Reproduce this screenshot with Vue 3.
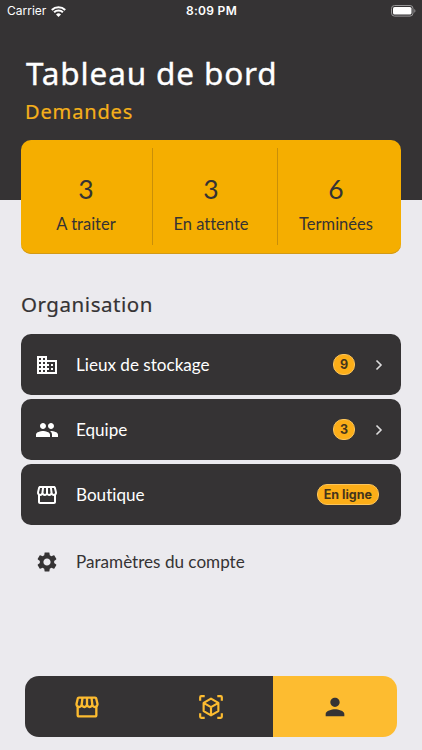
<script setup>
const paths = {
  business: 'M12 7V3H2v18h20V7H12zM6 19H4v-2h2v2zm0-4H4v-2h2v2zm0-4H4V9h2v2zm0-4H4V5h2v2zm4 12H8v-2h2v2zm0-4H8v-2h2v2zm0-4H8V9h2v2zm0-4H8V5h2v2zm10 12h-8v-2h2v-2h-2v-2h2v-2h-2V9h8v10zm-2-8h-2v2h2v-2zm0 4h-2v2h2v-2z',
  people: 'M16 11c1.66 0 2.99-1.34 2.99-3S17.66 5 16 5s-3 1.34-3 3 1.34 3 3 3zm-8 0c1.66 0 2.99-1.34 2.99-3S9.66 5 8 5 5 6.34 5 8s1.34 3 3 3zm0 2c-2.33 0-7 1.17-7 3.5V19h14v-2.500c0-2.330-4.670-3.500-7-3.500zm8 0c-.29 0-.62.02-.97.05 1.160.84 1.970 1.970 1.970 3.450V19h6v-2.500c0-2.330-4.670-3.500-7-3.500z',
  store: 'M21.9 8.89l-1.05-4.37c-.22-.9-1-1.52-1.91-1.52H5.05c-.9 0-1.69.63-1.9 1.52L2.1 8.89c-.24 1.02-.02 2.06.62 2.88.08.11.19.19.28.29V19c0 1.1.9 2 2 2h14c1.1 0 2-.9 2-2v-6.94c.09-.09.2-.18.28-.28.64-.82.87-1.87.62-2.89zm-2.99-3.9l1.05 4.37c.1.42.01.84-.25 1.17-.14.18-.44.47-.94.47-.61 0-1.14-.49-1.21-1.14L16.98 5l1.93-.01zM13 5h1.96l.54 4.52c.05.39-.07.78-.33 1.07-.22.26-.54.41-.95.41-.67 0-1.22-.59-1.22-1.31V5zM8.49 9.52L9.04 5H11v4.69c0 .72-.55 1.31-1.29 1.31-.34 0-.65-.15-.89-.41-.25-.29-.37-.68-.33-1.07zm-4.45-.16L5.05 5h1.97l-.58 4.86c-.08.65-.6 1.14-1.21 1.14-.49 0-.8-.29-.93-.47-.27-.32-.36-.75-.26-1.17zM5 19v-6.03c.08.01.15.03.23.03.87 0 1.66-.36 2.24-.95.6.6 1.4.95 2.31.95.87 0 1.65-.36 2.23-.93.59.57 1.39.93 2.29.93.84 0 1.64-.35 2.24-.95.58.59 1.37.95 2.24.95.08 0 .15-.02.23-.03V19H5z',
  settings: 'M19.14 12.94c.04-.3.06-.61.06-.94 0-.32-.02-.64-.07-.94l2.030-1.580c.18-.14.23-.41.12-.61l-1.920-3.320c-.12-.22-.37-.29-.59-.22l-2.390.96c-.5-.38-1.030-.7-1.620-.94l-.36-2.540c-.04-.24-.24-.41-.48-.41h-3.840c-.24 0-.43.17-.47.41l-.36 2.540c-.59.24-1.130.57-1.620.94l-2.390-.96c-.22-.08-.47 0-.59.22L2.740 8.870c-.12.21-.08.47.12.61l2.030 1.580c-.05.3-.09.63-.09.94s.02.64.07.94l-2.030 1.580c-.18.14-.23.41-.12.61l1.920 3.320c.12.22.37.29.59.22l2.390-.96c.5.38 1.030.7 1.620.94l.36 2.540c.05.24.24.41.48.41h3.840c.24 0 .44-.17.47-.41l.36-2.540c.59-.24 1.130-.56 1.620-.94l2.390.96c.22.08.47 0 .59-.22l1.920-3.320c.12-.22.07-.47-.12-.61l-2.010-1.580zM12 15.600c-1.980 0-3.600-1.620-3.600-3.600s1.620-3.600 3.600-3.600 3.600 1.620 3.600 3.600-1.620 3.600-3.600 3.600z',
  person: 'M12 12c2.21 0 4-1.79 4-4s-1.79-4-4-4-4 1.79-4 4 1.79 4 4 4zm0 2c-2.67 0-8 1.34-8 4v2h16v-2c0-2.66-5.33-4-8-4z',
}
const stats = [
  { value: 3, label: 'A traiter' },
  { value: 3, label: 'En attente' },
  { value: 6, label: 'Terminées' },
]
const rows = [
  { icon: 'business', label: 'Lieux de stockage', badge: '9', chevron: true },
  { icon: 'people', label: 'Equipe', badge: '3', chevron: true },
  { icon: 'store', label: 'Boutique', badge: 'En ligne', chevron: false },
]
</script>

<template>
  <div class="screen">
    <header class="top">
      <div class="status">
        <div class="carrier">
          <span>Carrier</span>
          <svg class="wifi" viewBox="0 0 15 11">
            <path d="M.8 3.900a9.600 9.600 0 0 1 13.400 0M3.100 6.300a6.300 6.300 0 0 1 8.800 0" fill="none" stroke="#fff" stroke-width="2.100" />
            <path d="M7.500 11 5 8.500a3.600 3.600 0 0 1 5 0z" fill="#fff" />
          </svg>
        </div>
        <span class="time">8:09 PM</span>
        <div class="battery-wrap">
          <svg class="battery" viewBox="0 0 25 12">
            <rect x=".5" y=".5" width="21.500" height="10.600" rx="3" fill="none" stroke="#979697" />
            <rect x="2" y="2" width="18.500" height="7.600" rx="1.600" fill="#fff" />
            <path d="M23.300 4v3.800c1.500-.6 1.500-3.200 0-3.800z" fill="#979697" />
          </svg>
        </div>
      </div>
      <h1 class="title">Tableau de bord</h1>
      <h2 class="subtitle">Demandes</h2>
    </header>

    <main class="content">
      <section class="stats">
        <div v-for="s in stats" :key="s.label" class="stat">
          <span class="value">{{ s.value }}</span>
          <span class="label">{{ s.label }}</span>
        </div>
      </section>

      <h2 class="section-title">Organisation</h2>
      <div class="rows">
        <div v-for="r in rows" :key="r.label" class="row">
          <svg class="icon" viewBox="0 0 24 24"><path :d="paths[r.icon]" /></svg>
          <span class="row-label">{{ r.label }}</span>
          <span class="badge">{{ r.badge }}</span>
          <svg v-if="r.chevron" class="chevron" viewBox="0 0 8 12"><path d="m1.500 1.500 4.500 4.500-4.500 4.500" /></svg>
        </div>
        <div class="row plain">
          <svg class="icon" viewBox="0 0 24 24"><path :d="paths.settings" /></svg>
          <span class="row-label">Paramètres du compte</span>
        </div>
      </div>
    </main>

    <nav class="tabs">
      <div class="tab">
        <svg class="tab-icon store" viewBox="0 0 24 24"><path :d="paths.store" /></svg>
      </div>
      <div class="tab">
        <svg class="tab-icon cube" viewBox="0 0 24 24">
          <path d="M2 6.200V3a1 1 0 0 1 1-1h3.200M17.800 2H21a1 1 0 0 1 1 1v3.200M22 17.800V21a1 1 0 0 1-1 1h-3.200M6.200 22H3a1 1 0 0 1-1-1v-3.200" />
          <path d="M12 4.300 18.800 8.200v7.600L12 19.700l-6.800-3.900V8.200zM5.500 8.400 12 12.100l6.500-3.700M12 12.100v7.200" />
        </svg>
      </div>
      <div class="tab active">
        <svg class="tab-icon" viewBox="0 0 24 24"><path :d="paths.person" /></svg>
      </div>
    </nav>
  </div>
</template>

<style>
body {
  margin: 0;
  background: #ebeaee;
}
</style>

<style scoped>
.screen {
  box-sizing: border-box;
  width: 422px;
  height: 750px;
  display: flex;
  flex-direction: column;
  background: #ebeaee;
  color: #353334;
  font-family: Lato, sans-serif;
  font-variant-ligatures: none;
  overflow: hidden;
}
.top {
  box-sizing: border-box;
  flex: none;
  height: 200px;
  background: #353334;
}
.status {
  display: grid;
  grid-template-columns: 1fr auto 1fr;
  align-items: center;
  height: 22px;
  padding: 0 6px 0 7px;
  color: #fff;
  font: 400 12px/22px Inter, sans-serif;
}
.carrier {
  display: flex;
  align-items: center;
  gap: 5px;
}
.wifi {
  width: 15px;
  height: 11px;
}
.time {
  font-weight: 600;
  letter-spacing: 0.3px;
}
.battery-wrap {
  display: flex;
  justify-content: flex-end;
}
.battery {
  width: 25px;
  height: 12px;
}
.title,
.subtitle,
.section-title {
  margin: 0;
  font-family: "Noto Sans", sans-serif;
  font-weight: 400;
  white-space: nowrap;
}
.title {
  padding: 29px 0 0 26px;
  color: #fff;
  font-size: 31.5px;
  line-height: 44px;
  letter-spacing: 0.85px;
  -webkit-text-stroke: 0.35px #fff;
}
.subtitle {
  padding: 3px 0 0 25px;
  color: #f5b01b;
  font-size: 20px;
  line-height: 28px;
  letter-spacing: 0.85px;
  -webkit-text-stroke: 0.2px #f5b01b;
}
.content {
  padding: 0 21px;
  margin-top: -60px;
}
.stats {
  box-sizing: border-box;
  display: grid;
  grid-template-columns: 131px 125px 1fr;
  height: 114px;
  padding: 8px 0 9px;
  border-radius: 10px;
  background: #f5ae00;
  box-shadow: inset 0 -1px 0 #d29a16;
}
.stat {
  display: flex;
  flex-direction: column;
  align-items: center;
  padding-top: 23px;
}
.stat:first-child {
  padding-right: 1px;
}
.stat:nth-child(2) {
  padding-right: 8px;
}
.stat:last-child {
  padding-right: 7px;
}
.stat + .stat {
  border-left: 1px solid #c98f08;
}
.value {
  font-size: 26.5px;
  line-height: 36px;
}
.label {
  margin-top: 5px;
  font-size: 16.5px;
  line-height: 24px;
}
.section-title {
  margin-top: 35px;
  font-size: 20.5px;
  line-height: 30px;
  letter-spacing: 0.55px;
  -webkit-text-stroke: 0.2px #353334;
}
.rows {
  display: flex;
  flex-direction: column;
  gap: 4px;
  margin-top: 15px;
}
.row {
  box-sizing: border-box;
  display: flex;
  align-items: center;
  height: 61px;
  padding: 0 22px 0 14px;
  border-radius: 10px;
  background: #353334;
  color: #fff;
}
.row.plain {
  margin-top: 2px;
  background: none;
  color: #353334;
}
.icon {
  width: 24px;
  height: 24px;
  fill: currentColor;
}
.row-label {
  flex: 1;
  margin-left: 17px;
  padding-top: 1px;
  font-size: 17.1px;
  line-height: 26px;
}
.badge {
  box-sizing: border-box;
  min-width: 22px;
  height: 21px;
  padding: 0 6px;
  border: 1px solid #fcc55a;
  border-radius: 10px;
  background: #fcae18;
  color: #44341c;
  font: 700 12.5px/19px Inter, sans-serif;
  text-align: center;
}
.chevron {
  width: 8px;
  height: 12px;
  margin-left: 20px;
  margin-right: -4px;
  fill: none;
  stroke: #dddcdd;
  stroke-width: 1.6;
}
.tabs {
  display: grid;
  grid-template-columns: repeat(3, 1fr);
  flex: none;
  height: 61px;
  margin: auto 25px 13px;
  border-radius: 14px;
  overflow: hidden;
}
.tab {
  display: flex;
  align-items: center;
  justify-content: center;
  background: #353334;
  color: #fdbc30;
}
.tab.active {
  background: #fdbc30;
  color: #353334;
}
.tab-icon {
  width: 28px;
  height: 28px;
  fill: currentColor;
}
.cube {
  width: 26px;
  height: 26px;
  fill: none;
  stroke: currentColor;
  stroke-width: 2;
  stroke-linejoin: round;
}
</style>
